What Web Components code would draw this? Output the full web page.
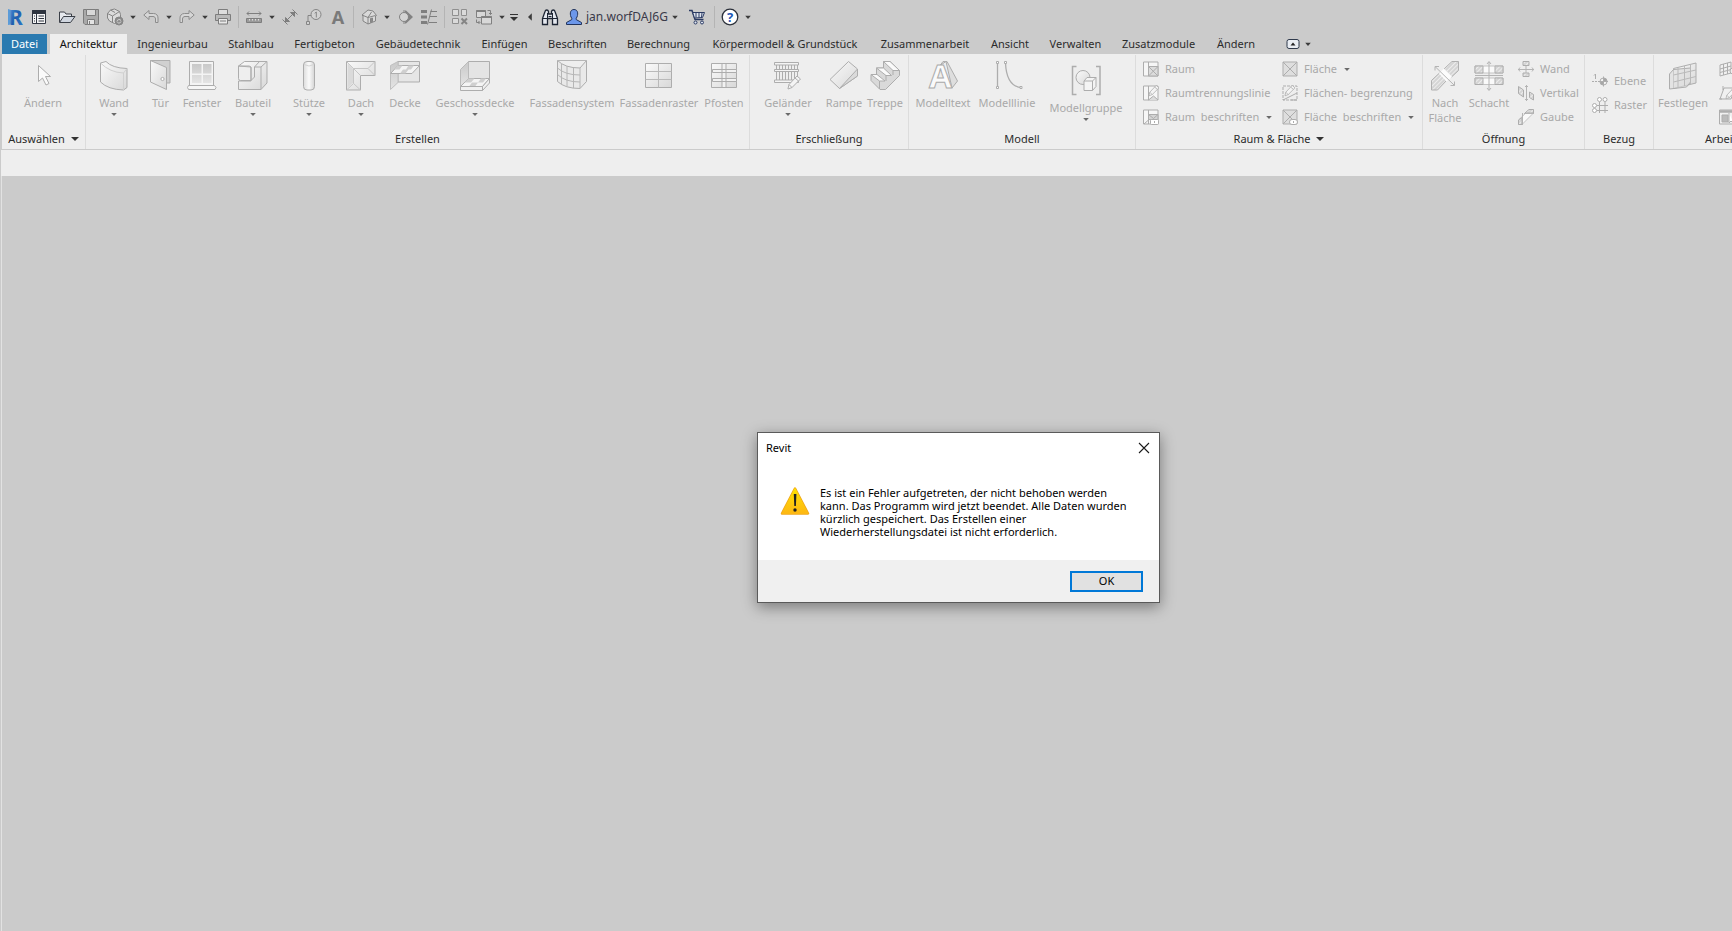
<!DOCTYPE html>
<html lang="de">
<head>
<meta charset="utf-8">
<title>Revit</title>
<style>
  html, body { height: 100%; margin: 0; }
  body {
    display: flex; flex-direction: column; overflow: hidden;
    background: #cbcbcb; color: #2b2b2b;
    font: 11px/16px "Noto Sans", "Open Sans", sans-serif;
  }
</style>
</head>
<body>

<quick-access-bar>
  <qat-button icon="logo" label="Revit"></qat-button>
  <qat-button icon="props" label="Eigenschaften"></qat-button>
  <bar-gap></bar-gap>
  <qat-button icon="open" label="Öffnen"></qat-button>
  <qat-button icon="save" label="Speichern"></qat-button>
  <qat-button icon="sync" label="Synchronisieren"></qat-button>
  <qat-button icon="down" label="Mehr" narrow></qat-button>
  <qat-button icon="undo" label="Rückgängig"></qat-button>
  <qat-button icon="down" label="Mehr" narrow></qat-button>
  <qat-button icon="redo" label="Wiederherstellen"></qat-button>
  <qat-button icon="down" label="Mehr" narrow></qat-button>
  <qat-button icon="print" label="Drucken"></qat-button>
  <bar-line></bar-line>
  <qat-button icon="measure" label="Messen"></qat-button>
  <qat-button icon="down" label="Mehr" narrow></qat-button>
  <qat-button icon="dim" label="Bemaßung"></qat-button>
  <qat-button icon="tag" label="Beschriftung"></qat-button>
  <qat-button icon="text" label="Text"></qat-button>
  <bar-line></bar-line>
  <qat-button icon="home" label="3D-Ansicht"></qat-button>
  <qat-button icon="down" label="Mehr" narrow></qat-button>
  <qat-button icon="section" label="Schnitt"></qat-button>
  <qat-button icon="thin" label="Dünne Linien"></qat-button>
  <bar-line></bar-line>
  <qat-button icon="closehidden" label="Verdeckte schließen"></qat-button>
  <qat-button icon="windows" label="Fenster wechseln"></qat-button>
  <qat-button icon="down" label="Mehr" narrow></qat-button>
  <qat-button icon="customize" label="Anpassen" narrow></qat-button>
  <bar-gap></bar-gap>
  <qat-button icon="left" label="Einklappen" narrow></qat-button>
  <bar-gap small></bar-gap>
  <qat-button icon="binoculars" label="Suchen"></qat-button>
  <qat-button icon="user" label="Konto"></qat-button>
  <user-name>jan.worfDAJ6G</user-name>
  <qat-button icon="down" label="Kontomenü" narrow></qat-button>
  <bar-gap></bar-gap>
  <qat-button icon="cart" label="App Store"></qat-button>
  <bar-gap small></bar-gap>
  <bar-line></bar-line>
  <qat-button icon="help" label="Hilfe"></qat-button>
  <qat-button icon="down" label="Hilfemenü" narrow></qat-button>
</quick-access-bar>

<ribbon-tabs>
  <ribbon-tab kind="file" style="width:45px">Datei</ribbon-tab>
  <ribbon-tab kind="active" style="width:77px">Architektur</ribbon-tab>
  <ribbon-tab style="width:91px">Ingenieurbau</ribbon-tab>
  <ribbon-tab style="width:66px">Stahlbau</ribbon-tab>
  <ribbon-tab style="width:81px">Fertigbeton</ribbon-tab>
  <ribbon-tab style="width:106px">Gebäudetechnik</ribbon-tab>
  <ribbon-tab style="width:67px">Einfügen</ribbon-tab>
  <ribbon-tab style="width:79px">Beschriften</ribbon-tab>
  <ribbon-tab style="width:83px">Berechnung</ribbon-tab>
  <ribbon-tab style="width:170px">Körpermodell &amp; Grundstück</ribbon-tab>
  <ribbon-tab style="width:110px">Zusammenarbeit</ribbon-tab>
  <ribbon-tab style="width:60px">Ansicht</ribbon-tab>
  <ribbon-tab style="width:71px">Verwalten</ribbon-tab>
  <ribbon-tab style="width:95px">Zusatzmodule</ribbon-tab>
  <ribbon-tab style="width:60px">Ändern</ribbon-tab>
  <ribbon-toggle></ribbon-toggle>
</ribbon-tabs>

<ribbon-bar>
  <ribbon-panel name="Auswählen" menu style="width:84px">
    <ribbon-tool icon="arrow" style="width:82px">Ändern</ribbon-tool>
  </ribbon-panel>
  <ribbon-panel name="Erstellen" style="width:664px">
    <ribbon-tool icon="wall" menu style="width:56px">Wand</ribbon-tool>
    <ribbon-tool icon="door" style="width:37px">Tür</ribbon-tool>
    <ribbon-tool icon="window" style="width:46px">Fenster</ribbon-tool>
    <ribbon-tool icon="component" menu style="width:56px">Bauteil</ribbon-tool>
    <ribbon-tool icon="column" menu style="width:56px">Stütze</ribbon-tool>
    <ribbon-tool icon="roof" menu style="width:48px">Dach</ribbon-tool>
    <ribbon-tool icon="ceiling" style="width:40px">Decke</ribbon-tool>
    <ribbon-tool icon="floor" menu style="width:100px">Geschossdecke</ribbon-tool>
    <ribbon-tool icon="curtain" style="width:94px">Fassadensystem</ribbon-tool>
    <ribbon-tool icon="grid" style="width:80px">Fassadenraster</ribbon-tool>
    <ribbon-tool icon="mullion" style="width:50px">Pfosten</ribbon-tool>
  </ribbon-panel>
  <ribbon-panel name="Erschließung" style="width:159px">
    <ribbon-tool icon="railing" menu style="width:76px">Geländer</ribbon-tool>
    <ribbon-tool icon="ramp" style="width:36px">Rampe</ribbon-tool>
    <ribbon-tool icon="stair" style="width:46px">Treppe</ribbon-tool>
  </ribbon-panel>
  <ribbon-panel name="Modell" style="width:227px">
    <ribbon-tool icon="mtext" style="width:68px">Modelltext</ribbon-tool>
    <ribbon-tool icon="mline" style="width:60px">Modelllinie</ribbon-tool>
    <ribbon-tool icon="mgroup" menu low style="width:98px">Modellgruppe</ribbon-tool>
  </ribbon-panel>
  <ribbon-panel name="Raum &amp; Fläche" menu style="width:287px">
    <item-stack style="width:139px">
      <ribbon-item icon="room">Raum</ribbon-item>
      <ribbon-item icon="roomsep">Raumtrennungslinie</ribbon-item>
      <ribbon-item icon="roomtag" menu>Raum&nbsp; beschriften</ribbon-item>
    </item-stack>
    <item-stack>
      <ribbon-item icon="area" menu>Fläche</ribbon-item>
      <ribbon-item icon="areasep">Flächen- begrenzung</ribbon-item>
      <ribbon-item icon="areatag" menu>Fläche&nbsp; beschriften</ribbon-item>
    </item-stack>
  </ribbon-panel>
  <ribbon-panel name="Öffnung" style="width:162px">
    <ribbon-tool icon="byface" style="width:44px">Nach<br>Fläche</ribbon-tool>
    <ribbon-tool icon="shaft" style="width:44px">Schacht</ribbon-tool>
    <item-stack>
      <ribbon-item icon="owall">Wand</ribbon-item>
      <ribbon-item icon="overt">Vertikal</ribbon-item>
      <ribbon-item icon="dormer">Gaube</ribbon-item>
    </item-stack>
  </ribbon-panel>
  <ribbon-panel name="Bezug" style="width:69px">
    <item-stack>
      <ribbon-item icon="level">Ebene</ribbon-item>
      <ribbon-item icon="raster">Raster</ribbon-item>
    </item-stack>
  </ribbon-panel>
  <ribbon-panel name="Arbeitsebene" style="width:172px">
    <ribbon-tool icon="setplane" style="width:58px">Festlegen</ribbon-tool>
    <item-stack>
      <ribbon-item icon="showplane" label="Anzeigen"></ribbon-item>
      <ribbon-item icon="refplane" label="Referenzebene"></ribbon-item>
      <ribbon-item icon="viewer" label="Viewer"></ribbon-item>
    </item-stack>
  </ribbon-panel>
</ribbon-bar>

<options-bar></options-bar>

<work-area>
  <message-dialog heading="Revit" action="OK">Es ist ein Fehler aufgetreten, der nicht behoben werden<br>kann. Das Programm wird jetzt beendet. Alle Daten wurden<br>kürzlich gespeichert. Das Erstellen einer<br>Wiederherstellungsdatei ist nicht erforderlich.</message-dialog>
</work-area>

<script>
const PENCIL = (x, y) => `<path transform="translate(${x} ${y})" d="M0 13 1 9 9 0.5 12.5 3.5 4 12 0 13.5zM7 2.5l3.5 3M1 9l3 3" fill="#f4f4f4"/>`;
const ARROWS = 'fill="none" stroke="#b4b4b4"';

/* Each entry: [viewBox size, markup]. The wrapper sets stroke and fill defaults. */
const ICONS = {
  down: [8, '<path d="M1.2 2.8h5.6L4 6z" fill="#3c3c3c" stroke="none"/>'],
  left: [8, '<path d="M5.8.2v7.6L2 4z" fill="#3c3c3c" stroke="none"/>'],
  customize: [10, '<path d="M1 2.5h8" stroke="#333"/><path d="M1 5h8L5 9z" fill="#333" stroke="none"/>'],
  logo: [18, '<defs><linearGradient id="r" x2="1" y2="1"><stop offset="0" stop-color="#4f9be0"/><stop offset=".5" stop-color="#1f5fae"/><stop offset="1" stop-color="#2e80d0"/></linearGradient></defs><path d="M2 1 5 2v14.500l-3 .500z" fill="#5b9bd8" stroke="none"/><text x="3" y="17" font-family="Noto Sans" font-weight="700" font-size="21" fill="url(#r)" stroke="none">R</text>'],
  props: [16, '<g stroke="#2f3540" fill="#f6f6f6"><path d="M1.5 1.5h13v13h-13z"/><path d="M1.5 1.5h13v3h-13z" fill="#2f3540"/><path d="M5.5 4.5v10M7.5 7h5.5M7.5 9.5h5.5M7.5 12h5.5" /><path d="M3 7h1M3 9.5h1M3 12h1"/></g>'],
  open: [18, '<g stroke="#3a3f47" fill="#e6e9ee"><path d="M1.5 14V4h5l1.5 2h5.5v3"/><path d="m1.5 14.5 4-6h11.5l-4.5 6z" fill="#d0d6df"/></g>'],
  save: [16, '<g stroke="#7c7c7c" fill="#a9a9a9"><path d="M.5.5h15v15H2l-1.500-1.500z"/><path d="M3.500.5h9v6h-9z" fill="#d8d8d8"/><path d="M4.500 10.500h7v5h-7z" fill="#e4e4e4"/><path d="M6.500 12v3"/></g>'],
  sync: [18, '<g stroke="#858585" fill="#dcdcdc"><path d="m1.500 5.500 3-3.500 4-1 5 2.500 1 3v5l-6 4-5-2.500-2-3z"/><path d="m1.500 5.500 5 2.500 7-4.500M6.500 8v7M4.500 2l4.500 2.500" fill="none"/><circle cx="13" cy="13" r="4" fill="#8b8b8b"/><path d="M11 13.500a2.200 2.200 0 0 1 4-1M15 13.500a2.200 2.200 0 0 1-3.500 1" stroke="#d8d8d8" fill="none"/></g>'],
  undo: [16, '<path d="M.8 6 6 1.500v3h4.500c3 0 4.500 2 4.500 4.500v4.500h-2.500V10c0-1.500-1-2.500-2.500-2.500H6v3z" fill="#d6d6d6" stroke="#8c8c8c"/>'],
  redo: [16, '<path d="M15.200 6 10 1.500v3H5.500C2.500 4.500 1 6.500 1 9v4.500h2.500V10c0-1.500 1-2.500 2.500-2.500h4v3z" fill="#d6d6d6" stroke="#8c8c8c"/>'],
  print: [16, '<g stroke="#7d7d7d" fill="#ddd"><path d="M3.500 5.500v-5h9v5"/><path d="M.5 5.500h15v6H.5z" fill="#b9b9b9"/><path d="M3.500 9.500h9v5.500h-9z" fill="#e8e8e8"/><path d="M5 12h6"/></g>'],
  measure: [16, '<g stroke="#7e7e7e"><path d="M1 4.500h14M3 2.500l-2 2 2 2M13 2.500l2 2-2 2" fill="none"/><path d="M.5 9.500h15v4H.5z" fill="#9b9b9b"/><path d="M3.500 10v1.500M6.500 10v1.500M9.500 10v1.500M12.500 10v1.500" stroke="#ddd"/></g>'],
  dim: [16, '<g stroke="#7e7e7e" fill="none"><path d="M3 13 13 3M10.500.5l5 5M.5 10.500l5 5"/><path d="M8.500 3.500h4v4zM3.500 8.500v4h4z" fill="#7e7e7e"/></g>'],
  tag: [16, '<g stroke="#858585" fill="#d2d2d2"><circle cx="10" cy="5.500" r="5"/><path d="M5 6.500H2v6" fill="none"/><path d="M.5 12.500h3v3h-3z"/><path d="M8.700 4.300 10.300 3v5.500" fill="none"/></g>'],
  text: [16, '<text x="8" y="14.500" text-anchor="middle" font-family="Noto Sans" font-weight="700" font-size="18" fill="#7a7a7a" stroke="none">A</text>'],
  home: [16, '<g stroke="#858585" fill="#d9d9d9"><path d="m1 6 6-5 5 1 3.500 4.500-1 .500v5L7 15l-5-3V7z"/><path d="M7 8.500 10.500 3M7 15V8.500L1 6M7 8.500l7.500-2" fill="none"/><path d="M9.500 9.500v4l2-.800v-3.700z" fill="#8b8b8b"/></g>'],
  section: [16, '<path d="M8 1.500h1l7 6.500-7 6.500H8z" fill="#828282" stroke="none"/><circle cx="7" cy="8" r="4.500" fill="#d4d4d4" stroke="#828282"/><path d="M7 1v2M7 13v2" stroke="#828282"/>'],
  thin: [16, '<g stroke="#7f7f7f"><path d="M0 2.500h6M0 8h6M0 13.500h6" stroke-width="3"/><path d="M9.500 2.500h6.500M9 7.500h7M8 13.500h8M6.500 15.500l4-15"/></g>'],
  closehidden: [16, '<g stroke="#8f8f8f" fill="#dadada"><path d="M.5.5h6v6h-6zM9.500.5h5v6h-5zM.5 9.500h6v5h-6z"/><path d="m9.500 9.500 5.500 5.500m0-5.500-5.500 5.500" stroke-width="2" stroke="#858585"/></g>'],
  windows: [16, '<g stroke="#808080" fill="#d8d8d8"><path d="M.5 1.500h9v7h-9z"/><path d="M.5 2h9" stroke-width="2"/><path d="M5.500 7.500h10v7.500h-10z"/><path d="M5.500 8h10" stroke-width="2"/><path d="M11.500 1.500h3v4M13 4l1.500 1.500L16 4M.5 10.500v3h3M2.500 12l1.500 1.500L2.500 15" fill="none"/></g>'],
  binoculars: [16, '<g stroke="#1c2433" fill="#e4e8ef"><path d="M3 2.500C3.500.5 6 .5 6.500 2.500V5h3V2.500c.5-2 3-2 3.500 0l2.500 7v6h-5v-6h-5v6h-5v-6z" stroke-width="1.300"/><path d="M.5 9.500h5M10.500 9.500h5M5.500 4v6M10.500 4v6M6.500 7.500h3" fill="none"/></g>'],
  user: [16, '<g stroke="#22345c"><path d="M.5 15.500v-2l4.500-2.500c1.500-.500 1-1.500 0-3-1.500-4-.500-7.500 3-7.500s4.500 3.500 3 7.500c-1 1.500-1.500 2.500 0 3l4.500 2.500v2z" fill="#6c97ea"/></g>'],
  cart: [16, '<g stroke="#2a3a63" fill="#dfe5f0"><path d="M0 1.500h3l3 9h8.500" fill="none" stroke-width="1.500"/><path d="M3.700 3.500h11.800L13.500 8.500l-8 .500z"/><path d="M7 4v4.500M10 4v4.500M13 4l-.500 4.500" fill="none"/><circle cx="6.500" cy="13.500" r="1.500"/><circle cx="13" cy="13.500" r="1.500"/></g>'],
  help: [18, '<circle cx="9" cy="9" r="7.800" fill="#fff" stroke="#2b303a" stroke-width="1.300"/><text x="9" y="13.500" text-anchor="middle" font-family="Noto Sans" font-weight="700" font-size="13" fill="#1d56b5" stroke="none">?</text>'],
  toggle: [14, '<rect x="1" y="2.500" width="12" height="9" rx="2" fill="#e9edf3" stroke="#2f3a4c"/><path d="M4.500 8.500h5L7 5.500z" fill="#222" stroke="none"/>'],

  arrow: [32, '<path d="M11.500 5.500v16l4-3.500 3.500 7 3-1.500-3.500-7h5z" fill="#fafafa"/>'],
  wall: [32, '<path d="M2.500 3 8 1.500Q14 8 29 8.500v19l-3.500 2.500Q10 29.500 2.500 22z" fill="url(#g)"/><path d="M2.500 3Q12 12.500 25.500 13V30M25.500 13 29 8.500" fill="none" stroke="#d0d0d0"/>'],
  door: [32, '<path d="M5.500.5h19.500v22.500h-4z" fill="#d0d0d0"/><path d="m5.500.5 16 7v22l-16-7.500z" fill="url(#g)"/><circle cx="17.500" cy="19" r="1.600" fill="#fff"/>'],
  window: [32, '<path d="M3.500 1.500h24v24h-24z" fill="#f4f4f4"/><path d="M6 4h9.500v9.500H6zM17 4h8.500v9.500H17zM6 15h9.500v8H6zM17 15h8.500v8H17z" fill="url(#d)" stroke="none"/><path d="M2.500 25.500h26l1.500 2-1 2H2.500l-1-2z" fill="#f6f6f6"/>'],
  component: [32, '<path d="m1.500 6 6-4.500h22.500v21.500l-6 6.500H1.500v-8.500h12.500v-14z" fill="url(#g)"/><path d="M1.500 6v12.500q0 2 2 2h10.500l3.500-3.500V7l5-5.500M1.500 6h10.500q2 0 2 2v12.500M17.500 7H24v22.500M24 7l6-5.500" fill="none"/>'],
  column: [32, '<rect x="10.500" y="1.500" width="11" height="28.500" rx="3.500" fill="url(#h)"/><path d="M11 4.500q5 3 10 0" fill="none" stroke="#d4d4d4"/>'],
  roof: [32, '<path d="M1.500 1.500h28.500v14H15.500V30h-14z" fill="url(#g)"/><path d="m1.500 1.500 7 7v15L1.500 30M8.500 8.500H23l7-7M23 8.500l7 7M8.500 23.500l7 6.500M8.500 8.500l7 7" fill="none" stroke="#c6c6c6"/><path d="M2.500 3 8 8.500v14L2.500 28z" fill="#dadada" stroke="none"/>'],
  ceiling: [32, '<path d="M9 1.500h21.500v20.500H9z" fill="#e6e6e6"/><path d="m1.500 5.500 7.500-4v21L1.500 29.500z" fill="url(#d)" stroke="#c0c0c0"/><path d="m1.500 13.500 7.500-8h21.500l-7.500 8z" fill="#f4f4f4"/><path d="m5 9.500 3.500-4h5l-3 4zM11 13.500l3-4h5.500l-3 4zM17 9.500l2.500-4h5.500l-3 4z" fill="#cfcfcf" stroke="none"/>'],
  floor: [32, '<path d="M9.500 1.500h21v17h-21z" fill="#e4e4e4"/><path d="m1.500 9.500 8-8v17l-8 8z" fill="url(#d)" stroke="#bbb"/><path d="m1.500 26.500 8-8h21l-7 8z" fill="#f4f4f4"/><path d="m5.500 22.500 4-4h6l-3.500 4zM10 26.500l3-4h6l-3 4zM19 22.500l3-4h5l-3 4z" fill="#cfcfcf" stroke="none"/><path d="M1.500 26.500h22v4h-22zM23.500 26.500l7-8v4.500l-7 7.500z" fill="#f0f0f0"/>'],
  curtain: [32, '<path d="M1.500.5Q9 8 24 8l6.500-7.500v21L24 28.500Q9 28.500 1.500 21.500z" fill="#e9e9e9"/><path d="M1.500.5h29M1.500 8Q9 15 24 15M1.500 14.500Q9 22 24 22M5.500 4v20.500M11 6v20.500M17.500 7.500v20.500M24 8v20.500" fill="none" stroke="#b6b6b6"/>'],
  grid: [32, '<path d="M2.500 3.500h26v24h-26z" fill="url(#g)"/><path d="M15.500 3.500v24M2.500 11.500h26M2.500 19.500h26" stroke="#b9b9b9"/>'],
  mullion: [32, '<path d="M3.500 3.500h25v24h-25z" fill="url(#g)"/><path d="M4.500 9.500h24v3h-24zM4.500 18.500h24v3h-24zM14 3.500h4v24h-4z" fill="#f2f2f2"/>'],
  railing: [32, '<path d="M2.500 2.500h24v2.500h-24zM2.500 9.500h24v2h-24zM2.500 20h24v2.500h-24z" fill="#f4f4f4"/><path d="M4.500 5v4M7.500 5v4M10.500 5v4M13.500 5v4M16.500 5v4M19.500 5v4M22.500 5v4M25.500 5v4M4.500 12v8M7.500 12v8M10.500 12v8M13.500 12v8M16.500 12v8M19.500 12v8M22.500 12v8M25.500 12v8"/>' + PENCIL(16, 15.5)],
  ramp: [32, '<path d="M2 19.500 20.500 1.500 29.500 9v7L11.500 28.500z" fill="url(#g)"/><path d="M29.500 9 11.500 28.500 29.500 16z" fill="#dadada"/>'],
  stair: [32, '<path d="M14.500 1.500H21l9.500 9v5L16.500 29.500H11l-9-9v-6h5.500V8h7z" fill="#d9d9d9"/><path d="M14.500 1.500H21l9.500 9H24zM7.500 8h7l8 7.500H17zM2 14.500h6l8 6.500h-5.500z" fill="#fafafa"/><path d="M24 10.500V15M17 15v6M10.500 21v8" fill="none"/>'],
  mtext: [32, '<path d="M19 1.500 25 28l5.500-7L20 1.500h-4l-3 4z" fill="#dedede"/><text x="13.500" y="28" text-anchor="middle" font-family="Noto Sans" font-weight="700" font-size="33" fill="#fafafa" stroke="#ababab">A</text>'],
  mline: [32, '<path d="M6.500 3v24M14.500 3Q15.500 26 30 27.500" fill="none" stroke-width="1.300"/><path d="M5.500 1.500h2v2h-2zM5.500 26.500h2v2h-2zM13.500 1.500h2v2h-2zM29 26.500h2v2h-2z" fill="#fff"/>'],
  mgroup: [32, '<path d="M6.500 1.500h-4v28h4M26 1.500h4v28h-4" fill="none" stroke-width="1.500"/><circle cx="13" cy="12.500" r="7" fill="url(#g)"/><path d="m14 16 3-3.500h9v9L22.500 25.500H14z" fill="#f4f4f4"/><path d="M14 16h8.500v9.500M22.500 16l3.500-3.500" fill="none"/>'],
  room: [16, '<path d="M.5 1h14.500v14H.5z" fill="#f6f6f6"/><path d="M5.500 5.500h9.500v9.500h-9.500z" fill="#dcdcdc"/><path d="M5.500 1v14M5.500 5.500H15M5.500 5.500 15 15M15 5.500 5.500 15"/>'],
  roomsep: [16, '<path d="M.5 1h14.500v14H.5z" fill="#f6f6f6"/><path d="M5.500 1v14M5.500 15l5-4 4.500 4" fill="#dcdcdc"/><g transform="translate(6 0) scale(.8)">' + PENCIL(0, 0) + '</g>'],
  roomtag: [16, '<path d="M.5 1h14.500v14H.5z" fill="#f6f6f6"/><path d="M5.500 5.500H15v5h-9.500z" fill="#d4d4d4"/><path d="M5.500 1v14M5.500 5.500l5 4 4.500-4M1 15l4.500-4" fill="none"/><rect x="7.500" y="10.500" width="8" height="5" rx="1" fill="#fff"/><path d="M11.500 12v2"/>'],
  area: [16, '<path d="M1 1h14v14H1z" fill="#dedede"/><path d="m1 1 14 14M15 1 1 15" fill="none"/>'],
  areasep: [16, '<path d="M1 1h14v14H1z" fill="#eee" stroke-dasharray="3 1"/><path d="M1 15 15 8M9 15h6" fill="none"/><g transform="translate(3 0) scale(.8)">' + PENCIL(0, 0) + '</g>'],
  areatag: [16, '<path d="M1 1h14v14H1z" fill="#dedede"/><path d="m1 1 14 14M15 1 1 15" fill="none"/><rect x="7.500" y="10.500" width="8" height="5" rx="2.500" fill="#fff"/><path d="M11.500 12v2"/>'],
  byface: [32, '<path d="M2.500 30v-9.500l8-7.500 7 7.500-9 9.500zM15 9l8-7.500h6.500v9l-7 6.500z" fill="url(#k)" stroke="#b0b0b0"/><path d="m10 13.500 5-5 8 8-5.500 5z" fill="#fcfcfc" stroke="none"/><path d="M6 6.500 25.500 25.500M6 10.500v-4h4M25.500 21.500v4h-4" ' + ARROWS + '/>'],
  shaft: [32, '<path d="M2 6h28v7H2zM2 18h28v6.500H2z" fill="#fafafa" stroke="#c4c4c4"/><path d="M2 6h8v7H2zM22 6h8v7h-8zM2 18h8v6.500H2zM22 18h8v6.500h-8z" fill="url(#k)"/><path d="M16 2v28M14 4l2-2.500L18 4M14 28l2 2.500 2-2.500M2 15.500h28" ' + ARROWS + '/>'],
  owall: [16, '<path d="M5 .5h6v4H5zM5 12h6v3.500H5z" fill="url(#k)"/><path d="M0 8.500h16M2 6.500l-1.500 2 1.500 2M14 6.500l1.500 2-1.500 2M8 5v7" ' + ARROWS + '/>'],
  overt: [16, '<path d="m.5 1.500 5 3.500v7l-5-3.500zM11.500 7l4 2.500v5.500l-4-2.500z" fill="url(#k)"/><path d="M8.500 0v16M7 2l1.500-1.500L10 2M7 14l1.500 1.500L10 14" ' + ARROWS + '/>'],
  dormer: [16, '<path d="M.5 15.500V11L11 1h4.500v3L4 15.500z" fill="#fafafa" stroke="#c4c4c4"/><path d="M.5 15.500V11L4 8.500v7zM7 4l4-3.500h4.500V4z" fill="url(#k)"/><path d="M4.500 4v12M6 4.500h10" ' + ARROWS + '/>'],
  level: [16, '<path d="M0 8.500h6" stroke-dasharray="2 1"/><path d="M6 8.500h10M2 2.500 3.500 1v5" fill="none"/><circle cx="11.500" cy="8.500" r="3.500" fill="#f4f4f4"/><path d="M11.500 8.500V5A3.500 3.500 0 0 1 15 8.500zM11.500 8.500V12A3.500 3.500 0 0 1 8 8.500z" fill="#a6a6a6"/><path d="M11.500 3.500v10"/>'],
  raster: [16, '<path d="M7.500 5v11M13 5v11M5 8.500h11M5 13.500h11"/><circle cx="7.500" cy="2.500" r="2" fill="#fff"/><circle cx="13" cy="2.500" r="2" fill="#fff"/><circle cx="2.500" cy="8.500" r="2" fill="#fff"/><circle cx="2.500" cy="13.500" r="2" fill="#fff"/>'],
  setplane: [32, '<path d="M6.500 8.500 29 3v20L6.500 28.500z" fill="url(#g)"/><path d="m2.500 14 4-4.500 17-1.500V22l-4 5-17 2z" fill="#dcdcdc" fill-opacity=".6"/><path d="M11 7.500v20M17.500 6v20M23.500 4.500v20M6.500 15 29 10M6.500 22 29 16.500" fill="none" stroke="#b9b9b9"/>'],
  showplane: [16, '<path d="M1 4 12 1v11L1 15z" fill="#f0f0f0"/><path d="M4.500 3v11M8.500 2v11M1 8l11-3M1 11.500l11-3" fill="none"/><circle cx="14" cy="10" r="3" fill="#eee"/>'],
  refplane: [16, '<path d="m1 14 4-11h11l-4 11z" fill="#f0f0f0"/><path d="M0 14h3M4 1v4"/><g transform="translate(7 3) scale(.8)">' + PENCIL(0, 0) + '</g>'],
  viewer: [16, '<path d="M.5 1h16v14H.5z" fill="#f0f0f0"/><path d="M.5 2.500h16" stroke-width="2.500"/><path d="M3 6h6v7H3z" fill="#bbb"/><path d="M10 4v10l2-2 3 3" fill="#fff"/>'],
  menu: [8, '<path d="M1.200 3h5.600L4 6z" fill="#6a6a6a" stroke="none"/>'],
  close: [12, '<path d="m1 1 10 10M11 1 1 11" stroke="#1a1a1a" stroke-width="1.100"/>'],
  warning: [30, '<defs><linearGradient id="w" x2="0" y2="1"><stop offset="0" stop-color="#ffe100"/><stop offset="1" stop-color="#fdb813"/></linearGradient></defs><path d="M15 2.500 28 27.500H2z" fill="url(#w)" stroke="#efa61a" stroke-width="2.500" stroke-linejoin="round"/><path d="M15 2.500 28 27.500H2z" fill="url(#w)" stroke="url(#w)" stroke-linejoin="round"/><path d="M13.800 8h2.600l-.500 12h-1.600z" fill="#222" stroke="none"/><circle cx="15" cy="24" r="1.700" fill="#222" stroke="none"/>']
};

const DEFS = '<defs><linearGradient id="g" x2="1" y2="1"><stop offset="0" stop-color="#fafafa"/><stop offset="1" stop-color="#d8d8d8"/></linearGradient><linearGradient id="d" x2="0" y2="1"><stop offset="0" stop-color="#c9c9c9"/><stop offset="1" stop-color="#e4e4e4"/></linearGradient><linearGradient id="h"><stop offset="0" stop-color="#dcdcdc"/><stop offset=".5" stop-color="#fafafa"/><stop offset="1" stop-color="#d4d4d4"/></linearGradient><pattern id="k" width="3" height="3" patternUnits="userSpaceOnUse" patternTransform="rotate(45)"><path d="M0 0h3v3H0z" fill="#ececec" stroke="none"/><path d="M1 0v3" stroke="#bdbdbd"/></pattern></defs>';

function define(name, css, html) {
  customElements.define(name, class extends HTMLElement {
    connectedCallback() {
      if (this.shadowRoot) return;
      this.attachShadow({ mode: 'open' }).innerHTML =
        `<style>*{box-sizing:border-box}button{font:inherit;color:inherit;background:none;border:0;padding:0;margin:0}${css}</style>` +
        (typeof html === 'function' ? html(this) : html);
    }
  });
}

define('ui-icon', ':host{display:block;flex:none;line-height:0}svg{display:block;overflow:visible}', el => {
  const [size, markup] = ICONS[el.getAttribute('name')];
  return `<svg width="${size}" height="${size}" viewBox="0 0 ${size} ${size}" stroke="#adadad" fill="none" aria-hidden="true">${DEFS}${markup}</svg>`;
});

define('quick-access-bar', ':host{display:flex;align-items:center;height:34px;flex:none;padding-left:3px;overflow:hidden}', '<slot></slot>');
define('qat-button', ':host{display:block;flex:none;width:24px}:host([narrow]){width:12px}button{display:flex;width:100%;height:24px;align-items:center;justify-content:center}',
  el => `<button aria-label="${el.getAttribute('label')}"><ui-icon name="${el.getAttribute('icon')}"></ui-icon></button>`);
define('bar-gap', ':host{display:block;flex:none;width:4px}:host([small]){width:2px}', '');
define('bar-line', ':host{display:block;flex:none;width:1px;height:22px;margin:0 3px;background:#b4b4b4}', '');
define('user-name', ':host{display:block;flex:none;width:83px;font-size:12px;color:#3a3a4a;white-space:nowrap}', '<slot></slot>');

define('ribbon-tabs', ':host{display:flex;height:20px;flex:none;padding-left:2px;overflow:hidden}', '<slot></slot>');
define('ribbon-tab', `:host{display:block;flex:none}
  :host([kind=file]){background:#2a7ab0;color:#fff;margin-right:3px}
  :host([kind=active]){background:#eee;color:#111}
  button{display:flex;width:100%;height:20px;align-items:center;justify-content:center;white-space:nowrap}`,
  '<button role="tab"><slot></slot></button>');
define('ribbon-toggle', ':host{display:block;margin-left:20px}button{display:flex;height:20px;gap:4px;align-items:center}',
  '<button aria-label="Multifunktionsleiste minimieren"><ui-icon name="toggle"></ui-icon><ui-icon name="down"></ui-icon></button>');

define('ribbon-bar', ':host{display:flex;flex:none;height:95px;margin-left:2px;background:#eee;border-bottom:1px solid #cbcbcb;overflow:hidden}', '<slot></slot>');
define('ribbon-panel', `:host{display:flex;flex:none;flex-direction:column;box-sizing:border-box;border-right:1px solid #dcdcdc;margin-top:1px}
  .tools{display:flex;flex:1;align-items:flex-start;padding-top:2px}
  .name{display:flex;flex:none;height:20px;align-items:center;justify-content:center;gap:6px;white-space:nowrap}`,
  el => {
    const menu = el.hasAttribute('menu'), tag = menu ? 'button' : 'div';
    return `<div class="tools"><slot></slot></div><${tag} class="name">${el.getAttribute('name').replace('&', '&amp;')}${menu ? '<svg width="8" height="4" viewBox="0 0 8 4"><path d="M0 0h8L4 4z" fill="#333"/></svg>' : ''}</${tag}>`;
  });
define('ribbon-tool', `:host{display:block;flex:none}
  :host([low]){margin-top:5px}
  button{display:flex;flex-direction:column;align-items:center;width:100%;padding-top:3px;color:#a9a9a9;line-height:15px;white-space:nowrap}
  span{margin-top:3px}`,
  el => `<button disabled><ui-icon name="${el.getAttribute('icon')}"></ui-icon><span><slot></slot></span>${el.hasAttribute('menu') ? '<ui-icon name="menu"></ui-icon>' : ''}</button>`);
define('item-stack', ':host{display:flex;flex-direction:column;justify-content:center;height:72px;padding-left:7px;box-sizing:border-box}', '<slot></slot>');
define('ribbon-item', ':host{display:block}button{display:flex;align-items:center;height:24px;gap:6px;color:#a9a9a9;white-space:nowrap}',
  el => `<button disabled aria-label="${el.getAttribute('label') || el.textContent}"><ui-icon name="${el.getAttribute('icon')}"></ui-icon><slot></slot>${el.hasAttribute('menu') ? '<ui-icon name="menu"></ui-icon>' : ''}</button>`);

define('options-bar', ':host{display:block;flex:none;height:26px;margin-left:1px;background:#eee}', '');
define('work-area', ':host{display:block;flex:1;position:relative;border-left:1px solid #e2e2e2;margin-left:1px;background:#cbcbcb}', '<slot></slot>');

define('message-dialog', `:host{position:absolute;left:755px;top:256px;width:403px;box-sizing:border-box;background:#fff;color:#000;border:1px solid #5a5a5a;box-shadow:0 4px 14px rgba(0,0,0,.4)}
  header{display:flex;align-items:center;justify-content:space-between;height:29px;padding:0 9px 0 8px}
  h1{font:inherit;margin:0}
  .body{display:flex;align-items:flex-start;height:98px;padding:24px 0 0 22px;gap:10px;line-height:13px;white-space:nowrap}
  p{margin:0}
  footer{display:flex;justify-content:flex-end;align-items:center;height:42px;background:#f0f0f0;padding-right:16px}
  footer button{width:73px;height:21px;border:2px solid #0078d7;background:#e1e1e1}`,
  el => `<section role="alertdialog" aria-label="${el.getAttribute('heading')}">
    <header><h1>${el.getAttribute('heading')}</h1><button aria-label="Schließen"><ui-icon name="close"></ui-icon></button></header>
    <div class="body"><ui-icon name="warning"></ui-icon><p><slot></slot></p></div>
    <footer><button>${el.getAttribute('action')}</button></footer></section>`);
</script>
</body>
</html>
